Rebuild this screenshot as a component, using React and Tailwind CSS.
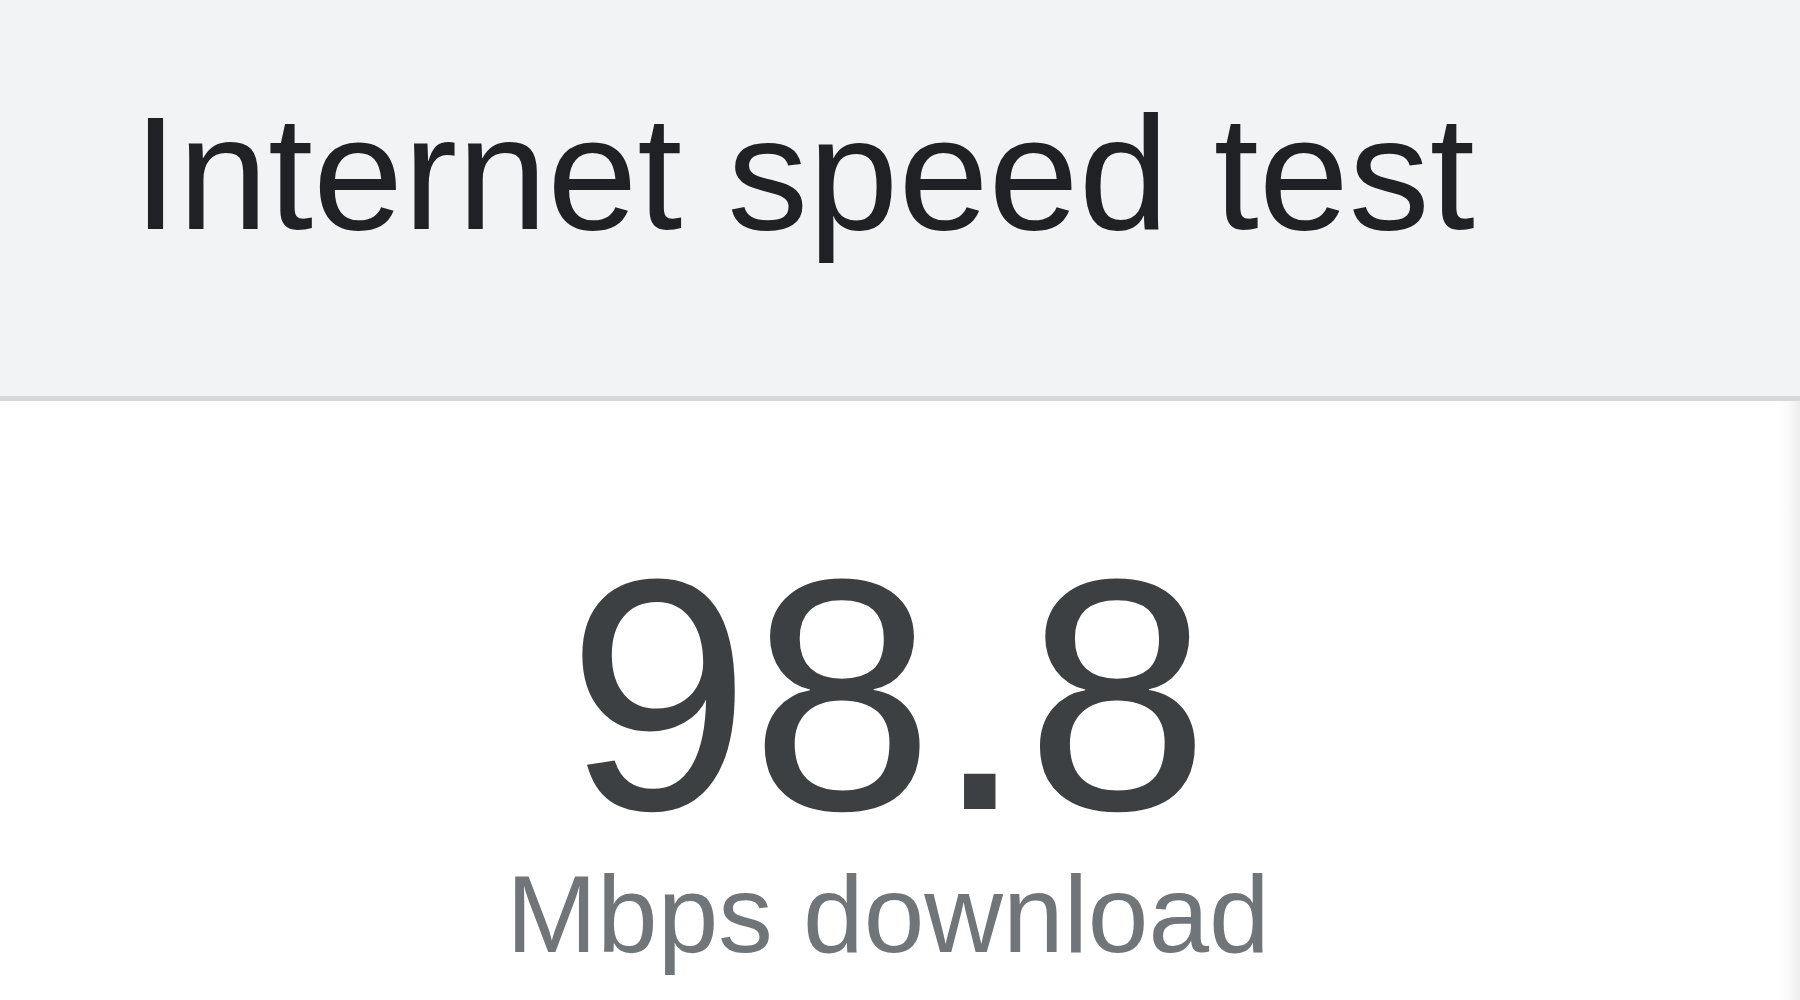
import React from "react";

const App = () => {
  const result = { speed: "98.8", label: "Mbps download" };

  return (
    <div className="w-[1800px] h-[1000px] overflow-hidden bg-white font-['Liberation_Sans',Arial,sans-serif]">
      {/* Header */}
      <header className="h-[401px] bg-[#f1f3f4] border-b-[5px] border-[#d6d7d9] pl-[133px] pt-[92px]">
        <h1 className="text-[162px] leading-none text-[#202124] whitespace-nowrap">
          Internet speed test
        </h1>
      </header>

      {/* Result */}
      <div className="flex h-[599px]">
        <section className="w-[1776px] flex flex-col items-center pt-[154px]">
          <div className="text-[330px] leading-[0.85] text-[#3c4043]">
            {result.speed}
          </div>
          <div className="mt-[35px] text-[109px] leading-[0.8] text-[#70757a]">
            {result.label}
          </div>
        </section>
        <div className="flex-1 bg-gradient-to-r from-white via-[#fbfbfb] to-[#ededed]" />
      </div>
    </div>
  );
};

export default App;
